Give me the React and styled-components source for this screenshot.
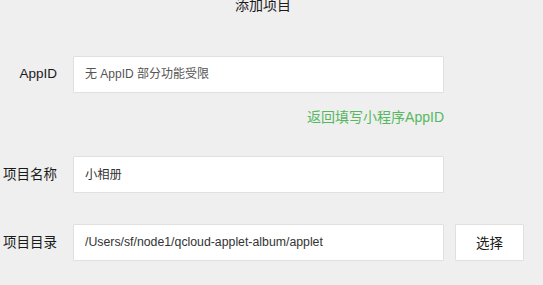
import styled, { createGlobalStyle } from "styled-components";

const GlobalStyle = createGlobalStyle`
  html, body {
    margin: 0;
    padding: 0;
    background: #efefef;
  }
  body {
    font-family: "Liberation Sans", "Noto Sans CJK SC", sans-serif;
    color: #1a1a1a;
  }
`;

const Page = styled.div`
  width: 543px;
  height: 285px;
  overflow: hidden;
  display: flex;
  flex-direction: column;
`;

const Title = styled.div`
  margin-top: -5px;
  width: 526px;
  line-height: 20px;
  font-size: 14px;
  text-align: center;
  color: #1a1a1a;
`;

const Row = styled.div`
  display: flex;
  align-items: center;
  margin-top: ${(p) => p.$top}px;
  height: 37px;
`;

const Label = styled.div`
  width: 57px;
  margin-right: 16px;
  padding-bottom: 3px;
  text-align: right;
  font-size: 13.5px;
  color: #1a1a1a;
  white-space: nowrap;
`;

const Field = styled.input`
  box-sizing: border-box;
  width: 371px;
  height: 37px;
  margin: 0;
  padding: 0 0 2px 11px;
  border: 1px solid #e0e0e0;
  border-radius: 1px;
  background: #fff;
  font-family: inherit;
  font-size: 12.3px;
  color: #333;
  outline: none;

  &::placeholder {
    color: #555;
    font-size: 12px;
  }
`;

const Button = styled.button`
  box-sizing: border-box;
  width: 69px;
  height: 37px;
  margin-left: 11px;
  padding: 0 0 2px;
  border: 1px solid #e0e0e0;
  border-radius: 1px;
  background: #fff;
  font-family: inherit;
  font-size: 13.5px;
  color: #1a1a1a;
  cursor: pointer;
`;

const Hint = styled.a`
  display: block;
  margin-top: 14px;
  width: 444px;
  line-height: 20px;
  text-align: right;
  font-size: 14px;
  color: #55b860;
  text-decoration: none;
  cursor: pointer;
`;

export default function App() {
  return (
    <>
      <GlobalStyle />
      <Page>
        <Title>添加项目</Title>
        <Row $top={41}>
          <Label>AppID</Label>
          <Field placeholder="无 AppID 部分功能受限" readOnly />
        </Row>
        <Hint>返回填写小程序AppID</Hint>
        <Row $top={29}>
          <Label>项目名称</Label>
          <Field defaultValue="小相册" />
        </Row>
        <Row $top={31}>
          <Label>项目目录</Label>
          <Field defaultValue="/Users/sf/node1/qcloud-applet-album/applet" />
          <Button>选择</Button>
        </Row>
      </Page>
    </>
  );
}
